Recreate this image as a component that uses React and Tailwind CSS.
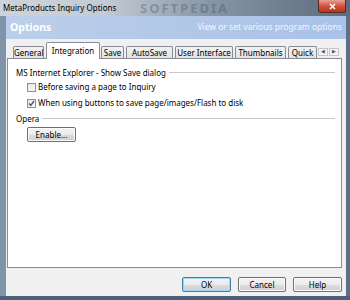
import React from 'react';

const tabs = [
	{ label: 'General', w: 'w-[31px]' },
	{ label: 'Integration', w: 'w-[54px]', active: true },
	{ label: 'Save', w: 'w-[23px]' },
	{ label: 'AutoSave', w: 'w-[47px]' },
	{ label: 'User Interface', w: 'w-[58px]' },
	{ label: 'Thumbnails', w: 'w-[51px]' },
	{ label: 'Quick', w: 'w-[29px]' },
];

function Checkbox({ checked }) {
	return (
		<span className="w-[9px] h-[9px] border border-[#8f8f8f] bg-gradient-to-br from-[#e6e6e6] to-[#fbfbfb] flex items-center justify-center shrink-0">
			{checked && (
				<svg width="7" height="7" viewBox="0 0 7 7">
					<path d="M1 3.5 L2.8 5.5 L6 1" stroke="#3c5a88" strokeWidth="1.4" fill="none" />
				</svg>
			)}
		</span>
	);
}

function Button({ children, primary, className = '' }) {
	return (
		<button
			className={`h-[15px] rounded-[2px] border text-[8px] text-black flex items-center justify-center bg-[linear-gradient(#f3f3f3_0%,#ebebeb_50%,#dddddd_51%,#cfcfcf_100%)] ${
				primary ? 'border-[#3c7fb1] shadow-[inset_0_0_0_1px_#9fd5f5]' : 'border-[#707070] shadow-[inset_0_0_0_1px_#fcfcfc]'
			} ${className}`}
		>
			{children}
		</button>
	);
}

function GroupHeader({ title }) {
	return (
		<div className="flex items-center gap-[3px] mr-[6px]">
			<span className="whitespace-nowrap">{title}</span>
			<span className="flex-1 h-[2px] border-t border-[#c9c9c9] border-b border-b-white" />
		</div>
	);
}

export default function App() {
	return (
		<div
			className="w-[350px] h-[300px] flex flex-col overflow-hidden bg-[linear-gradient(90deg,#7f93aa,#8ea2b9_40%,#5c6f84)]"
			style={{ fontFamily: '"Noto Sans", "Open Sans", sans-serif' }}
		>
			{/* title bar */}
			<div className="h-[16px] flex items-start shrink-0 bg-[linear-gradient(90deg,#cdd3da,#c3cbd4_30%,#8795a5_60%,#5b6b7d)] relative">
				<span className="text-[8px] text-black ml-[3px] mt-[3px] leading-[10px]">MetaProducts Inquiry Options</span>
				<span className="absolute left-[140px] top-[1px] text-[13px] font-bold text-[#3e4b5a]/35 tracking-[2px] leading-[14px]">SOFTPEDIA</span>
				<div className="ml-auto mr-[4px] w-[28px] h-[13px] rounded-b-[3px] border border-t-0 border-[#5a2a24] bg-[linear-gradient(#e8a193,#d0533f_50%,#b93520)] flex items-center justify-center">
					<svg width="7" height="7" viewBox="0 0 7 7">
						<path d="M1 1 L6 6 M6 1 L1 6" stroke="white" strokeWidth="1.6" />
					</svg>
				</div>
			</div>

			<div className="flex flex-1">
				<div className="w-[6px]" />
				{/* client */}
				<div className="w-[340px] flex flex-col bg-[#f0f0f0]">
					<div className="h-[23px] flex items-center justify-between px-[4px] bg-[linear-gradient(90deg,#bccfea,#b2c8e8_50%,#a9c2e8)]">
						<span className="text-[10.5px] font-bold text-white">Options</span>
						<span className="text-[8.5px] text-[#f2f6fc]">View or set various program options</span>
					</div>

					{/* tabs */}
					<div className="h-[19px] flex items-end pl-[7px] relative z-10">
						{tabs.map((t) =>
							t.active ? (
								<div
									key={t.label}
									className={`${t.w} h-[17px] -mb-px mr-[1px] bg-white border border-b-0 border-[#898c95] rounded-t-[2px] text-[8px] flex items-start justify-center pt-[2px] text-black`}
								>
									{t.label}
								</div>
							) : (
								<div
									key={t.label}
									className={`${t.w} h-[12px] mr-[2px] border border-b-0 border-[#898c95] rounded-t-[2px] bg-[linear-gradient(#f2f2f2,#e2e2e2)] text-[8px] leading-[11px] text-center whitespace-nowrap overflow-hidden text-black`}
								>
									{t.label}
								</div>
							)
						)}
						<div className="flex mb-[2px] ml-[-1px] gap-px">
							<span className="w-[10px] h-[8px] border border-[#c6c6c6] bg-[#f4f4f4] flex items-center justify-center text-[5px] text-[#555]">◀</span>
							<span className="w-[10px] h-[8px] border border-[#c6c6c6] bg-[#f4f4f4] flex items-center justify-center text-[5px] text-[#555]">▶</span>
						</div>
					</div>

					{/* panel */}
					<div className="ml-[1px] w-[335px] h-[210px] bg-white border border-[#898c95] pl-[8px] pt-[8px] text-[8px] text-black">
						<GroupHeader title="MS Internet Explorer - Show Save dialog" />
						<div className="flex items-center gap-[2px] ml-[11px] mt-[2px]">
							<Checkbox />
							<span>Before saving a page to Inquiry</span>
						</div>
						<div className="flex items-center gap-[2px] ml-[11px] mt-[4px]">
							<Checkbox checked />
							<span>When using buttons to save page/images/Flash to disk</span>
						</div>
						<div className="mt-[4px]">
							<GroupHeader title="Opera" />
						</div>
						<Button className="w-[49px] ml-[11px] mt-[2px]">Enable...</Button>
					</div>

					{/* bottom buttons */}
					<div className="flex justify-end gap-[7px] mr-[4px] mt-[9px]">
						<Button primary className="w-[49px]">OK</Button>
						<Button className="w-[48px]">Cancel</Button>
						<Button className="w-[49px]">Help</Button>
					</div>
				</div>
				<div className="w-[4px]" />
			</div>
			<div className="h-[4px] bg-[#4d627a]" />
		</div>
	);
}
